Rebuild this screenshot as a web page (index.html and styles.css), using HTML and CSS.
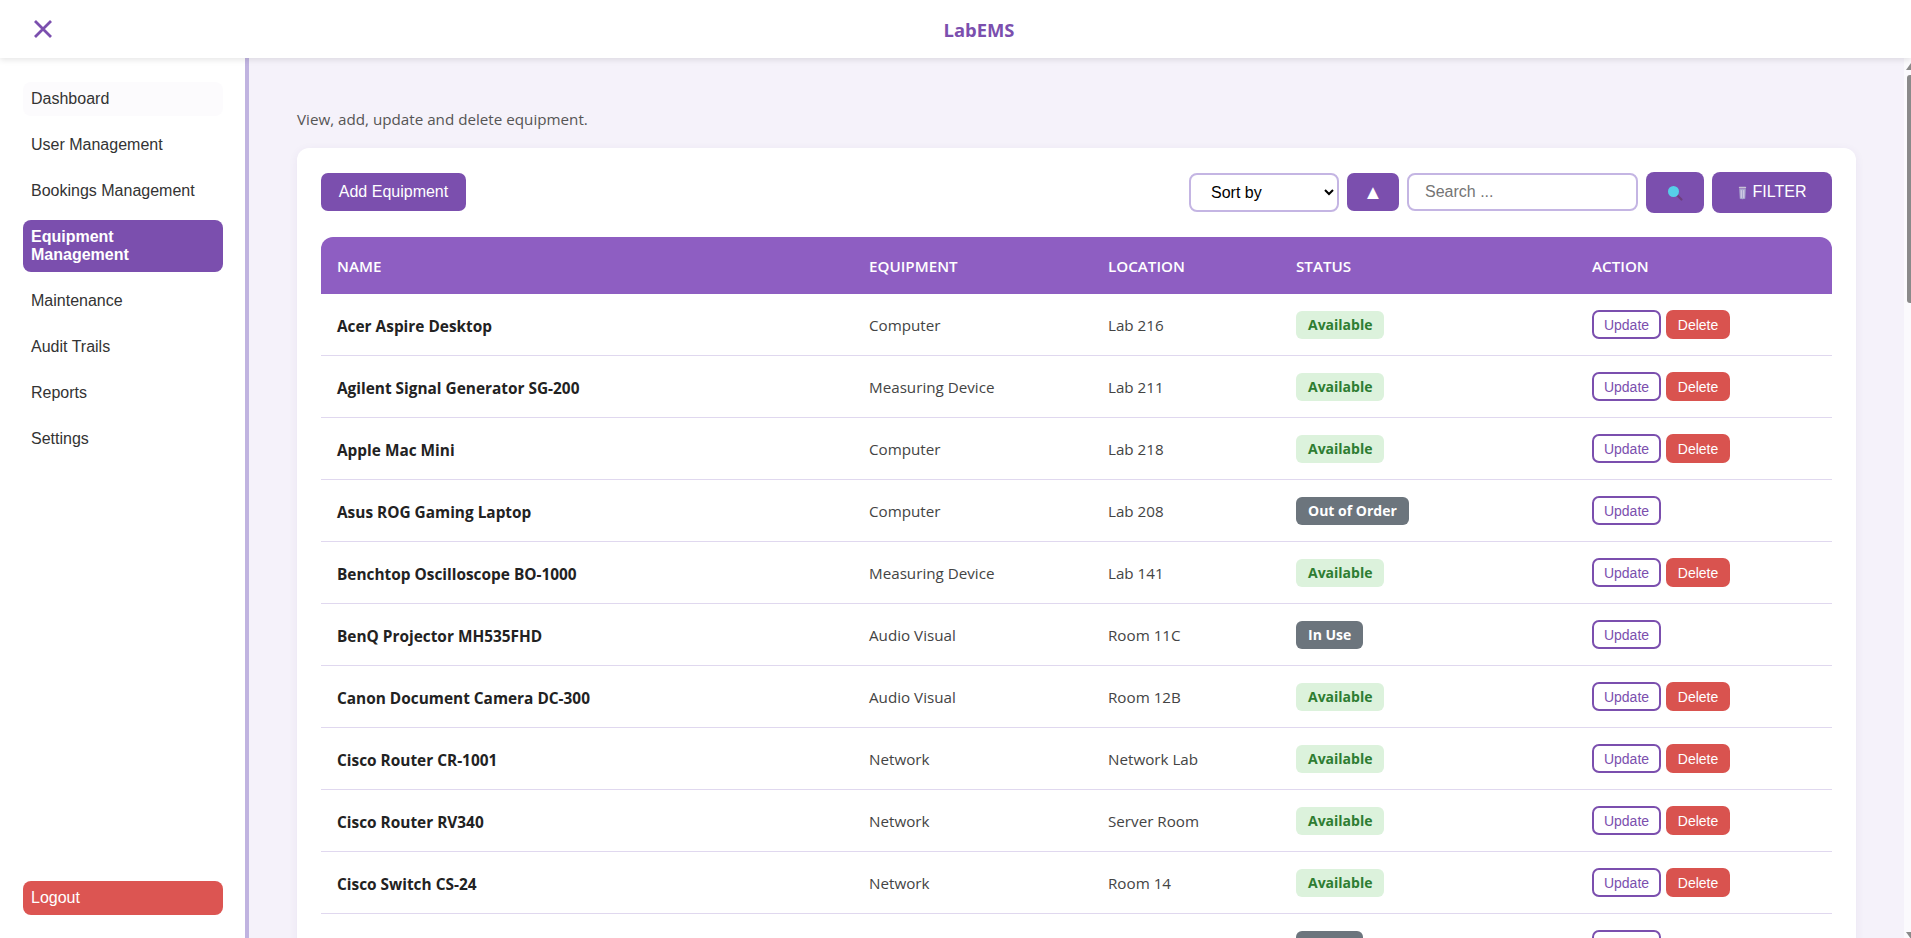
FILE: index.html
```html
<!DOCTYPE html>
<html lang="en">
<head>
  <meta charset="UTF-8">
  <title>LabEMS</title>
  <link rel="stylesheet" href="styles.css">
</head>
<body>
  <header class="topbar">
    <button class="menu-btn" aria-label="Close menu">
      <svg width="20" height="20" viewBox="0 0 20 20"><path d="M2 2 L18 18 M18 2 L2 18" stroke="#7b4fae" stroke-width="2.8" fill="none"/></svg>
    </button>
    <div class="brand">LabEMS</div>
  </header>

  <div class="shell">
    <aside class="sidebar">
      <a class="nav-item nav-first">Dashboard</a>
      <a class="nav-item">User Management</a>
      <a class="nav-item">Bookings Management</a>
      <a class="nav-item nav-active">Equipment Management</a>
      <a class="nav-item">Maintenance</a>
      <a class="nav-item">Audit Trails</a>
      <a class="nav-item">Reports</a>
      <a class="nav-item">Settings</a>
      <a class="nav-item nav-logout">Logout</a>
    </aside>

    <main class="content">
      <p class="subtitle">View, add, update and delete equipment.</p>

      <section class="card">
        <div class="toolbar">
          <button class="btn btn-add">Add Equipment</button>
          <div class="tools">
            <select class="sort-select">
              <option>Sort by</option>
            </select>
            <button class="btn btn-order">▲</button>
            <input class="search" type="text" placeholder="Search ...">
            <button class="btn btn-search" aria-label="Search">
              <svg width="20" height="20" viewBox="0 0 20 20">
                <path d="M12 12 L16.5 16.5" stroke="#6d3f7e" stroke-width="2.2" stroke-linecap="round"/>
                <circle cx="8.5" cy="8.5" r="5.5" fill="#56cfe8"/>
              </svg>
            </button>
            <button class="btn btn-filter">
              <svg width="9" height="14" viewBox="0 0 11 16">
                <rect x="1" y="0.5" width="9" height="2" rx="1" fill="#c9c4d6"/>
                <path d="M1.5 3 H9.5 L8.8 15 Q5.5 16 2.2 15 Z" fill="#a9a6cf"/>
                <path d="M4 4.5 V14 M7 4.5 V14" stroke="#e2dcee" stroke-width="1"/>
              </svg>
              <span class="filter-label">FILTER</span>
            </button>
          </div>
        </div>

        <table class="equip-table">
          <colgroup>
            <col class="col-name"><col class="col-type"><col class="col-loc"><col class="col-status"><col class="col-action">
          </colgroup>
          <thead>
            <tr><th>NAME</th><th>EQUIPMENT</th><th>LOCATION</th><th>STATUS</th><th>ACTION</th></tr>
          </thead>
          <tbody id="rows"></tbody>
        </table>
      </section>
    </main>

    <div class="scrollbar">
      <span class="arrow-up"></span>
      <span class="thumb"></span>
      <span class="arrow-down"></span>
    </div>
  </div>

  <script>
    const equipment = [
      ["Acer Aspire Desktop", "Computer", "Lab 216", "Available"],
      ["Agilent Signal Generator SG-200", "Measuring Device", "Lab 211", "Available"],
      ["Apple Mac Mini", "Computer", "Lab 218", "Available"],
      ["Asus ROG Gaming Laptop", "Computer", "Lab 208", "Out of Order"],
      ["Benchtop Oscilloscope BO-1000", "Measuring Device", "Lab 141", "Available"],
      ["BenQ Projector MH535FHD", "Audio Visual", "Room 11C", "In Use"],
      ["Canon Document Camera DC-300", "Audio Visual", "Room 12B", "Available"],
      ["Cisco Router CR-1001", "Network", "Network Lab", "Available"],
      ["Cisco Router RV340", "Network", "Server Room", "Available"],
      ["Cisco Switch CS-24", "Network", "Room 14", "Available"],
      ["Dell Latitude Laptop", "Computer", "Lab 210", "In Use"]
    ];

    const tbody = document.getElementById("rows");
    equipment.forEach(([name, type, loc, status]) => {
      const row = document.createElement("tr");
      const badge = status === "Available" ? "badge-ok" : "badge-off";
      const del = status === "Available" ? '<button class="btn-small btn-delete">Delete</button>' : "";
      row.innerHTML = `<td class="cell-name">${name}</td><td>${type}</td><td>${loc}</td>` +
        `<td><span class="badge ${badge}">${status}</span></td>` +
        `<td><div class="actions"><button class="btn-small btn-update">Update</button>${del}</div></td>`;
      tbody.appendChild(row);
    });
  </script>
</body>
</html>
```

FILE: styles.css
```css
* { box-sizing: border-box; }
html, body { height: 100%; margin: 0; overflow: hidden; }
body { display: flex; flex-direction: column; font-family: "Open Sans", sans-serif; color: #222; background: #f5f2fa; }

.topbar { position: relative; z-index: 2; display: flex; align-items: center; justify-content: center; flex: 0 0 58px; padding-left: 47px; background: #fff; box-shadow: 0 2px 6px rgba(0, 0, 0, 0.1); }
.menu-btn { position: absolute; left: 33px; top: 19px; padding: 0; width: 20px; height: 20px; border: 0; background: none; }
.brand { font-size: 18.4px; font-weight: 700; color: #7b4fae; }

.shell { position: relative; display: flex; flex: 1; min-height: 0; }

.sidebar { display: flex; flex-direction: column; gap: 12px; flex: 0 0 249px; padding: 24px 22px 23px 23px; background: #fff; border-right: 4px solid #c0b3e0; font-family: "Liberation Sans", Arial, sans-serif; font-size: 16px; }
.nav-item { padding: 8px; line-height: 18px; border-radius: 8px; color: #333; }
.nav-first { background: #fcfbfd; }
.nav-active { background: #7b4fae; color: #fff; font-weight: 700; }
.nav-logout { margin-top: auto; background: #dc5552; color: #fff; }

.content { flex: 1; min-width: 0; padding: 51px 55px 0 48px; overflow: hidden; }
.subtitle { margin: 0 0 19px; font-size: 15.2px; line-height: 20px; color: #555; }

.card { padding: 24px 24px 0; background: #fff; border-radius: 12px; box-shadow: 0 2px 10px rgba(80, 50, 130, 0.07); }

.toolbar { display: flex; align-items: center; justify-content: space-between; height: 41px; margin-bottom: 24px; }
.tools { display: flex; align-items: center; gap: 8px; }

.btn { border: 0; border-radius: 7px; background: #7b4fae; color: #fff; font-family: "Liberation Sans", Arial, sans-serif; font-size: 16px; }
.btn-add { width: 145px; height: 38px; margin-bottom: 1px; }
.btn-order { width: 52px; height: 38px; margin-bottom: 1px; padding: 0; font-size: 20px; line-height: 1; }
.btn-search { display: flex; align-items: center; justify-content: center; width: 58px; height: 41px; padding: 0; border-radius: 8px; }
.btn-filter { display: flex; align-items: center; justify-content: center; gap: 6px; width: 120px; height: 41px; padding: 0; border-radius: 8px; }
.filter-label { margin-bottom: 2px; }

.sort-select { width: 150px; height: 39px; padding: 0 12px 0 16px; border: 2px solid #c4b5e3; border-radius: 8px; background: #fff; font-family: "Liberation Sans", Arial, sans-serif; font-size: 16px; color: #000; }
.search { width: 231px; height: 38px; margin-bottom: 1px; padding: 0 16px; border: 2px solid #c4b5e3; border-radius: 8px; background: #fff; font-family: "Liberation Sans", Arial, sans-serif; font-size: 16px; }
.search::placeholder { color: #757575; }

.equip-table { width: 100%; table-layout: fixed; border-collapse: separate; border-spacing: 0; font-size: 15.2px; }
.col-name { width: 532px; }
.col-type { width: 239px; }
.col-loc { width: 188px; }
.col-status { width: 296px; }
.col-action { width: 256px; }

.equip-table th { height: 57px; padding: 0 16px; background: #8e5ec2; color: #fff; font-size: 15.2px; font-weight: 600; text-align: left; }
.equip-table th:first-child { border-top-left-radius: 12px; }
.equip-table th:last-child { border-top-right-radius: 12px; }
.equip-table td { height: 62px; padding: 0 16px; border-bottom: 1.5px solid #e0d8ef; color: #444; }
.equip-table td.cell-name { padding-top: 3px; font-size: 15.4px; font-weight: 700; color: #222; }

.badge { display: inline-block; height: 28px; padding: 0 12px; border-radius: 6px; font-size: 14px; font-weight: 700; line-height: 28px; }
.badge-ok { background: #dcf2dc; color: #2e7d32; }
.badge-off { background: #6c757d; color: #fff; }

.actions { display: flex; gap: 5px; }
.btn-small { height: 29px; padding: 0; border-radius: 7px; font-family: "Liberation Sans", Arial, sans-serif; font-size: 14px; }
.btn-update { width: 69px; border: 2px solid #7b4fae; background: #fff; color: #7b4fae; }
.btn-delete { width: 64px; border: 0; background: #d9534f; color: #fff; }

.scrollbar { position: absolute; top: 0; right: 0; bottom: 0; width: 7px; background: #fbfafd; }
.thumb { position: absolute; top: 17px; left: 3px; width: 4px; height: 228px; border-radius: 3px 0 0 3px; background: #8a8a8a; }
.arrow-up { position: absolute; top: 5px; left: 2px; border: 5px solid transparent; border-top: 0; border-bottom: 7px solid #8a8a8a; }
.arrow-down { position: absolute; bottom: -1px; left: 2px; border: 5px solid transparent; border-bottom: 0; border-top: 7px solid #8a8a8a; }
```
